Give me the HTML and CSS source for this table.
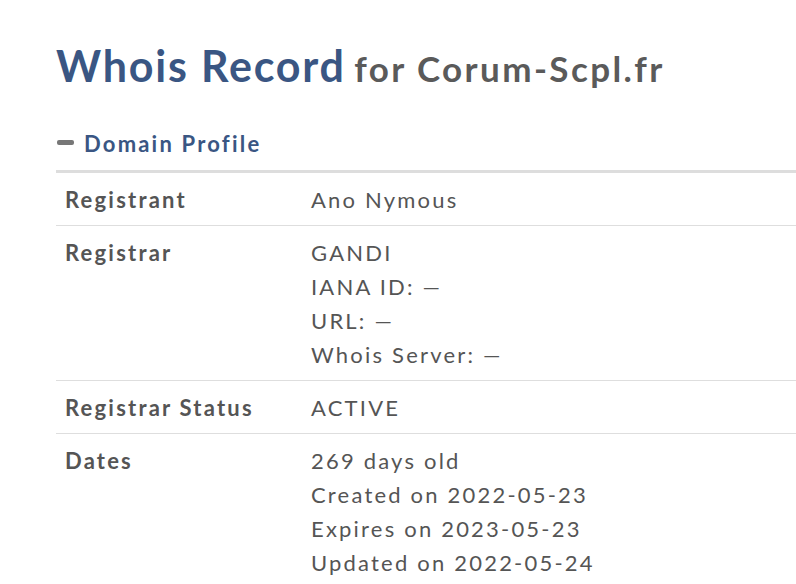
FILE: index.html
```html
<!DOCTYPE html>
<html>
<head>
<meta charset="utf-8">
<link rel="stylesheet" href="styles.css">
</head>
<body>
<div class="page">
  <h1 class="title"><span class="main">Whois Record</span> <span class="sub">for Corum-Scpl.fr</span></h1>
  <h2 class="section"><span class="minus"></span>Domain Profile</h2>
  <div class="table">
    <div class="row">
      <div class="label">Registrant</div>
      <div class="value">Ano Nymous</div>
    </div>
    <div class="row">
      <div class="label">Registrar</div>
      <div class="value">GANDI<br>IANA ID: —<br>URL: —<br>Whois Server: —</div>
    </div>
    <div class="row">
      <div class="label">Registrar Status</div>
      <div class="value">ACTIVE</div>
    </div>
    <div class="row">
      <div class="label">Dates</div>
      <div class="value">269 days old<br>Created on 2022-05-23<br>Expires on 2023-05-23<br>Updated on 2022-05-24</div>
    </div>
  </div>
</div>
</body>
</html>
```
FILE: styles.css
```css
html, body {
  margin: 0;
  padding: 0;
  background: #fff;
  overflow: hidden;
}
.page {
  font-family: Lato, "Noto Sans", sans-serif;
  padding: 38px 0 0 56px;
  width: 900px;
}
.title {
  margin: 0;
  font-size: 35px;
  font-weight: 700;
  line-height: 56px;
}
.title .main {
  color: #3a5683;
  font-size: 43px;
  letter-spacing: 1.8px;
}
.title .sub {
  color: #5a5a5a;
  font-size: 35px;
  letter-spacing: 2.4px;
}
.section {
  margin: 33px 0 0 0;
  display: flex;
  align-items: center;
  font-size: 22px;
  font-weight: 700;
  color: #3a5683;
  line-height: 30px;
  letter-spacing: 2.2px;
}
.minus {
  display: inline-block;
  width: 17px;
  height: 5px;
  border-radius: 2px;
  background: #777;
  margin: 0 10px 4px 1px;
}
.table {
  margin-top: 11px;
  border-top: 3px solid #ddd;
}
.row {
  display: grid;
  grid-template-columns: 255px 1fr;
  border-bottom: 1px solid #dedede;
  padding: 10px 0 8px 0;
  font-size: 22px;
  line-height: 34px;
  letter-spacing: 2.2px;
  color: #555;
}
.label {
  font-weight: 700;
  padding-left: 9px;
}
.value {
  font-weight: 400;
}
```
